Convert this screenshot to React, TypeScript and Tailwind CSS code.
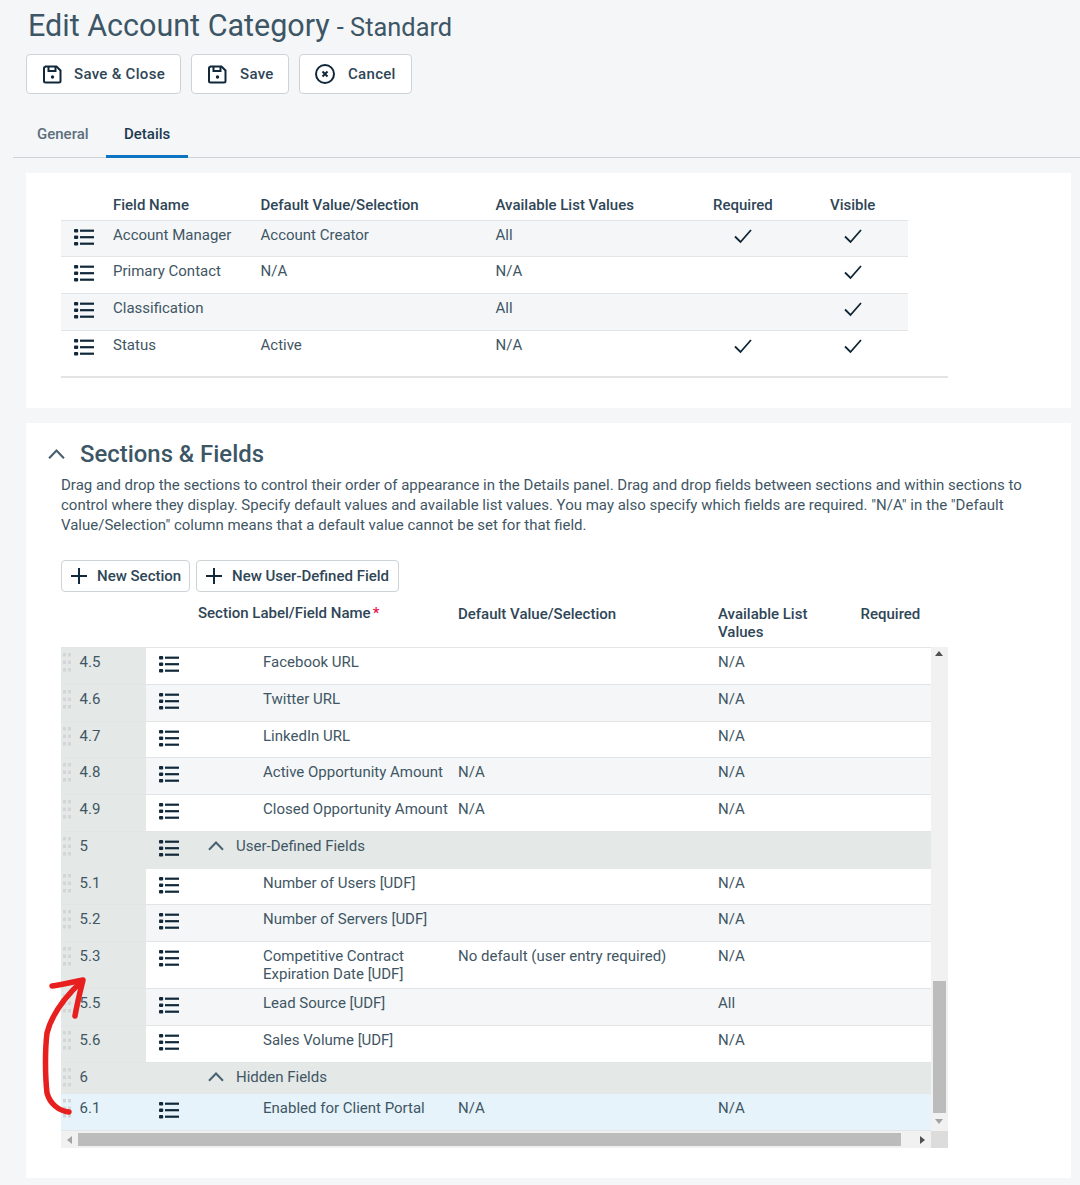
import React from "react";

const Check = () => (
  <svg width="20" height="16" viewBox="0 0 20 16" fill="none" stroke="#0f2534" strokeWidth="1.8" className="block">
    <path d="M2 8.5 7.5 14 18 2" />
  </svg>
);
const ListIcon = () => (
  <svg width="20" height="17" viewBox="0 0 20 17" className="block" fill="#10283a">
    <rect x="0" y="0" width="4.2" height="3.6" rx="1" />
    <rect x="0" y="6.5" width="4.2" height="3.6" rx="1" />
    <rect x="0" y="13" width="4.2" height="3.6" rx="1" />
    <rect x="6" y="0.6" width="14" height="2.2" />
    <rect x="6" y="7.1" width="14" height="2.2" />
    <rect x="6" y="13.6" width="14" height="2.2" />
  </svg>
);
const SaveIcon = () => (
  <svg width="19" height="19" viewBox="0 0 19 19" fill="none" stroke="#10283a" strokeWidth="2" className="block">
    <path d="M2.5 1.5h11l4 4v10.5a1.5 1.5 0 0 1-1.5 1.5h-13.500a1.500 1.500 0 0 1-1.500-1.500v-13a1 1 0 0 1 1-1z" />
    <path d="M5.500 1.500v4.500h7v-4.500" />
    <circle cx="9.500" cy="12" r="1.700" fill="#10283a" stroke="none" />
  </svg>
);
const CancelIcon = () => (
  <svg width="20" height="20" viewBox="0 0 20 20" fill="none" stroke="#10283a" strokeWidth="2" className="block">
    <circle cx="10" cy="10" r="9" />
    <path d="M7.500 7.500l5 5M12.500 7.500l-5 5" />
  </svg>
);
const Plus = () => (
  <svg width="16" height="16" viewBox="0 0 16 16" stroke="#10283a" strokeWidth="2" className="block">
    <path d="M8 0v16M0 8h16" />
  </svg>
);
const Chevron = ({ w = 16, color = "#4a626f" }: { w?: number; color?: string }) => (
  <svg width={w} height={w * 0.6} viewBox="0 0 16 9.600" fill="none" stroke={color} strokeWidth="2" className="block">
    <path d="M1 8.800 8 1.500l7 7.300" />
  </svg>
);
const Grip = () => (
  <svg width="8" height="19" viewBox="0 0 8 19" fill="#d3d6d6" className="block">
    {[0, 7.500, 15].map((y) => (
      <g key={y}>
        <rect x="0" y={y} width="3" height="3.500" />
        <rect x="5" y={y} width="3" height="3.500" />
      </g>
    ))}
  </svg>
);

const Btn = ({ icon, label, cls }: { icon: React.ReactNode; label: string; cls: string }) => (
  <div className={`flex h-10 items-center rounded border border-[#ced3d7] bg-white font-medium tracking-[0.3px] text-[#2f4657] ${cls}`}>
    {icon}
    <span>{label}</span>
  </div>
);

const topRows = [
  { n: "Account Manager", d: "Account Creator", a: "All", r: true, h: "h-[36px]", bg: "bg-[#f4f6f8]" },
  { n: "Primary Contact", d: "N/A", a: "N/A", r: false, h: "h-[37px]", bg: "" },
  { n: "Classification", d: "", a: "All", r: false, h: "h-[37px]", bg: "bg-[#f4f6f8]" },
  { n: "Status", d: "Active", a: "N/A", r: true, h: "h-[46px]", bg: "" },
];

type Row = { num: string; name?: string; def?: string; av?: string; section?: boolean; noIcon?: boolean; h: string; bg?: string; left?: string; two?: boolean };
const rows: Row[] = [
  { num: "4.5", name: "Facebook URL", av: "N/A", h: "h-[37px]", bg: "bg-white" },
  { num: "4.6", name: "Twitter URL", av: "N/A", h: "h-[37px]", bg: "bg-[#f4f6f8]" },
  { num: "4.7", name: "LinkedIn URL", av: "N/A", h: "h-[36px]", bg: "bg-white" },
  { num: "4.8", name: "Active Opportunity Amount", def: "N/A", av: "N/A", h: "h-[37px]", bg: "bg-[#f4f6f8]" },
  { num: "4.9", name: "Closed Opportunity Amount", def: "N/A", av: "N/A", h: "h-[37px]", bg: "bg-white" },
  { num: "5", name: "User-Defined Fields", section: true, h: "h-[37px]" },
  { num: "5.1", name: "Number of Users [UDF]", av: "N/A", h: "h-[36px]", bg: "bg-white" },
  { num: "5.2", name: "Number of Servers [UDF]", av: "N/A", h: "h-[37px]", bg: "bg-[#f4f6f8]" },
  { num: "5.3", name: "Competitive Contract Expiration Date [UDF]", def: "No default (user entry required)", av: "N/A", h: "h-[47px]", bg: "bg-white", two: true },
  { num: "5.5", name: "Lead Source [UDF]", av: "All", h: "h-[37px]", bg: "bg-[#f4f6f8]" },
  { num: "5.6", name: "Sales Volume [UDF]", av: "N/A", h: "h-[37px]", bg: "bg-white" },
  { num: "6", name: "Hidden Fields", section: true, noIcon: true, h: "h-[31px]" },
  { num: "6.1", name: "Enabled for Client Portal", def: "N/A", av: "N/A", h: "h-[37px]", bg: "bg-[#e6f3fa]", left: "bg-[#e6f3fa]" },
];

export default function App() {
  return (
    <div className="relative h-[1185px] w-[1080px] overflow-hidden bg-[#f5f6f8] font-['Roboto',sans-serif] text-[15px] leading-[18px] text-[#3f5664]">
      <div className="flex h-[54px] items-center pb-[3px] pl-[28px] text-[#3d5666]">
        <span className="text-[30.5px] leading-[40px]">Edit Account Category</span>
        <span className="ml-[7px] mt-[3px] text-[25.4px] leading-[32px]">- Standard</span>
      </div>

      <div className="flex gap-[10px] pl-[26px]">
        <Btn icon={<SaveIcon />} label="Save & Close" cls="w-[155px] gap-[12px] pl-[16px]" />
        <Btn icon={<SaveIcon />} label="Save" cls="w-[98px] gap-[13px] pl-[16px]" />
        <Btn icon={<CancelIcon />} label="Cancel" cls="w-[113px] gap-[13px] pl-[15px]" />
      </div>

      <div className="ml-[13px] mt-[20px] flex h-[44px] border-b border-[#ced3d7] font-medium">
        <div className="ml-[24px] mt-[11px] w-[52px] text-[#5b6f7c]">General</div>
        <div className="ml-[17px] h-[44px] w-[82px] border-b-[3px] border-[#0b75c3] pl-[18px] pt-[11px] text-[#1e3a50]">Details</div>
      </div>

      <div className="ml-[26px] mt-[15px] h-[235px] w-[1045px] bg-white pl-[35px] pt-[23px]">
        <div className="flex h-[24px] font-medium text-[#2f4657]">
          <div className="w-[52px]" />
          <div className="w-[147.5px]">Field Name</div>
          <div className="w-[235px]">Default Value/Selection</div>
          <div className="w-[217.5px]">Available List Values</div>
          <div className="w-[117px]">Required</div>
          <div>Visible</div>
        </div>
        <div className="w-[887px] border-b-2 border-[#e2e4e6]">
          {topRows.map((r) => (
            <div key={r.n} className={`flex w-[847px] border-t border-[#e2e4e6] pt-[5px] ${r.h} ${r.bg}`}>
              <div className="w-[52px] pl-[13px] pt-[3px]"><ListIcon /></div>
              <div className="w-[147.5px]">{r.n}</div>
              <div className="w-[235px]">{r.d}</div>
              <div className="w-[217.5px]">{r.a}</div>
              <div className="w-[117px] pl-[20px] pt-[2px]">{r.r && <Check />}</div>
              <div className="pl-[13px] pt-[2px]"><Check /></div>
            </div>
          ))}
        </div>
      </div>

      <div className="ml-[26px] mt-[15px] h-[755px] w-[1045px] bg-white pl-[35px] pt-[17px]">
        <div className="-ml-[13px] flex h-[28px] items-center gap-[15px]">
          <Chevron w={17} />
          <span className="text-[23.9px] font-medium leading-[28px] text-[#3d5666]">Sections &amp; Fields</span>
        </div>
        <p className="mt-[7px] w-[970px] leading-[20px]">
          Drag and drop the sections to control their order of appearance in the Details panel. Drag and drop fields between sections and within sections to control where they display. Specify default values and available list values. You may also specify which fields are required. "N/A" in the "Default Value/Selection" column means that a default value cannot be set for that field.
        </p>

        <div className="mt-[25px] flex gap-[6px] font-medium text-[#2f4657]">
          <div className="flex h-[32px] w-[129px] items-center gap-[10px] rounded-sm border border-[#ced3d7] pl-[9px]"><Plus /><span>New Section</span></div>
          <div className="flex h-[32px] w-[203px] items-center gap-[10px] rounded-sm border border-[#ced3d7] pl-[9px]"><Plus /><span>New User-Defined Field</span></div>
        </div>

        <div className="flex h-[55px] pt-[12px] font-medium text-[#2f4657]">
          <div className="w-[137px]" />
          <div className="w-[260px]">Section Label/Field Name<span className="ml-[2px] text-[#e8124f]">*</span></div>
          <div className="w-[260px] pt-[1px]">Default Value/Selection</div>
          <div className="w-[142.5px] pt-[1px]">Available List<br />Values</div>
          <div className="pt-[1px]">Required</div>
        </div>

        <div className="flex h-[500px] w-[887px] flex-col border-b border-[#e2e4e6]">
          <div className="flex flex-1">
            <div className="w-[870px] border-t border-[#e2e4e6]">
              {rows.map((r) =>
                r.section ? (
                  <div key={r.num} className={`flex bg-[#e4e8e7] pl-[2px] pt-[5px] ${r.h}`}>
                    <Grip />
                    <div className="w-[75px] pl-[8.5px]">{r.num}</div>
                    <div className="w-[62px] pl-[13px] pt-[3px]">{!r.noIcon && <ListIcon />}</div>
                    <div className="flex gap-[12px]"><div className="pt-[4px]"><Chevron w={16} /></div><span>{r.name}</span></div>
                  </div>
                ) : (
                  <div key={r.num} className={`flex border-b border-[#e2e4e6] ${r.h} ${r.bg}`}>
                    <div className={`flex w-[85px] shrink-0 pl-[2px] pt-[5px] ${r.left ?? "bg-[#e4e8e7]"}`}>
                      <Grip />
                      <div className="pl-[8.5px]">{r.num}</div>
                    </div>
                    <div className="w-[117px] shrink-0 pl-[13px] pt-[8px]"><ListIcon /></div>
                    <div className={`w-[195px] shrink-0 pt-[5px] ${r.two ? "pr-[20px]" : ""}`}>{r.name}</div>
                    <div className="w-[260px] shrink-0 pt-[5px]">{r.def}</div>
                    <div className="pt-[5px]">{r.av}</div>
                  </div>
                ),
              )}
            </div>
            <div className="relative w-[17px] bg-[#f1f1f1]">
              <div className="absolute left-[4px] top-[4px] h-0 w-0 border-x-[4px] border-b-[5px] border-x-transparent border-b-[#505050]" />
              <div className="absolute bottom-[18px] left-[2px] h-[132px] w-[13px] bg-[#bcbcbc]" />
              <div className="absolute bottom-[7px] left-[4px] h-0 w-0 border-x-[4px] border-t-[5px] border-x-transparent border-t-[#a3a3a3]" />
            </div>
          </div>
          <div className="flex h-[17px] w-full items-center bg-[#f1f1f1]">
            <div className="ml-[6px] h-0 w-0 border-y-[4px] border-r-[5px] border-y-transparent border-r-[#a3a3a3]" />
            <div className="ml-[6px] h-[13px] w-[823px] bg-[#bcbcbc]" />
            <div className="ml-[19px] h-0 w-0 border-y-[4px] border-l-[5px] border-y-transparent border-l-[#505050]" />
            <div className="ml-auto h-[17px] w-[17px] bg-[#dcdcdc]" />
          </div>
        </div>
      </div>

      <svg width="1080" height="1185" viewBox="0 0 1080 1185" fill="none" stroke="#e81f1f" strokeWidth="5.5" strokeLinecap="round" strokeLinejoin="round" className="pointer-events-none absolute left-0 top-0">
        <path d="M69 1112c-10-1-19-8-22-19-2-18-2-44 0-60 5-20 20-38 35-52" />
        <path d="M52 986c10-1 20-4 31-6-3 12-6 24-8 36" />
      </svg>
    </div>
  );
}
